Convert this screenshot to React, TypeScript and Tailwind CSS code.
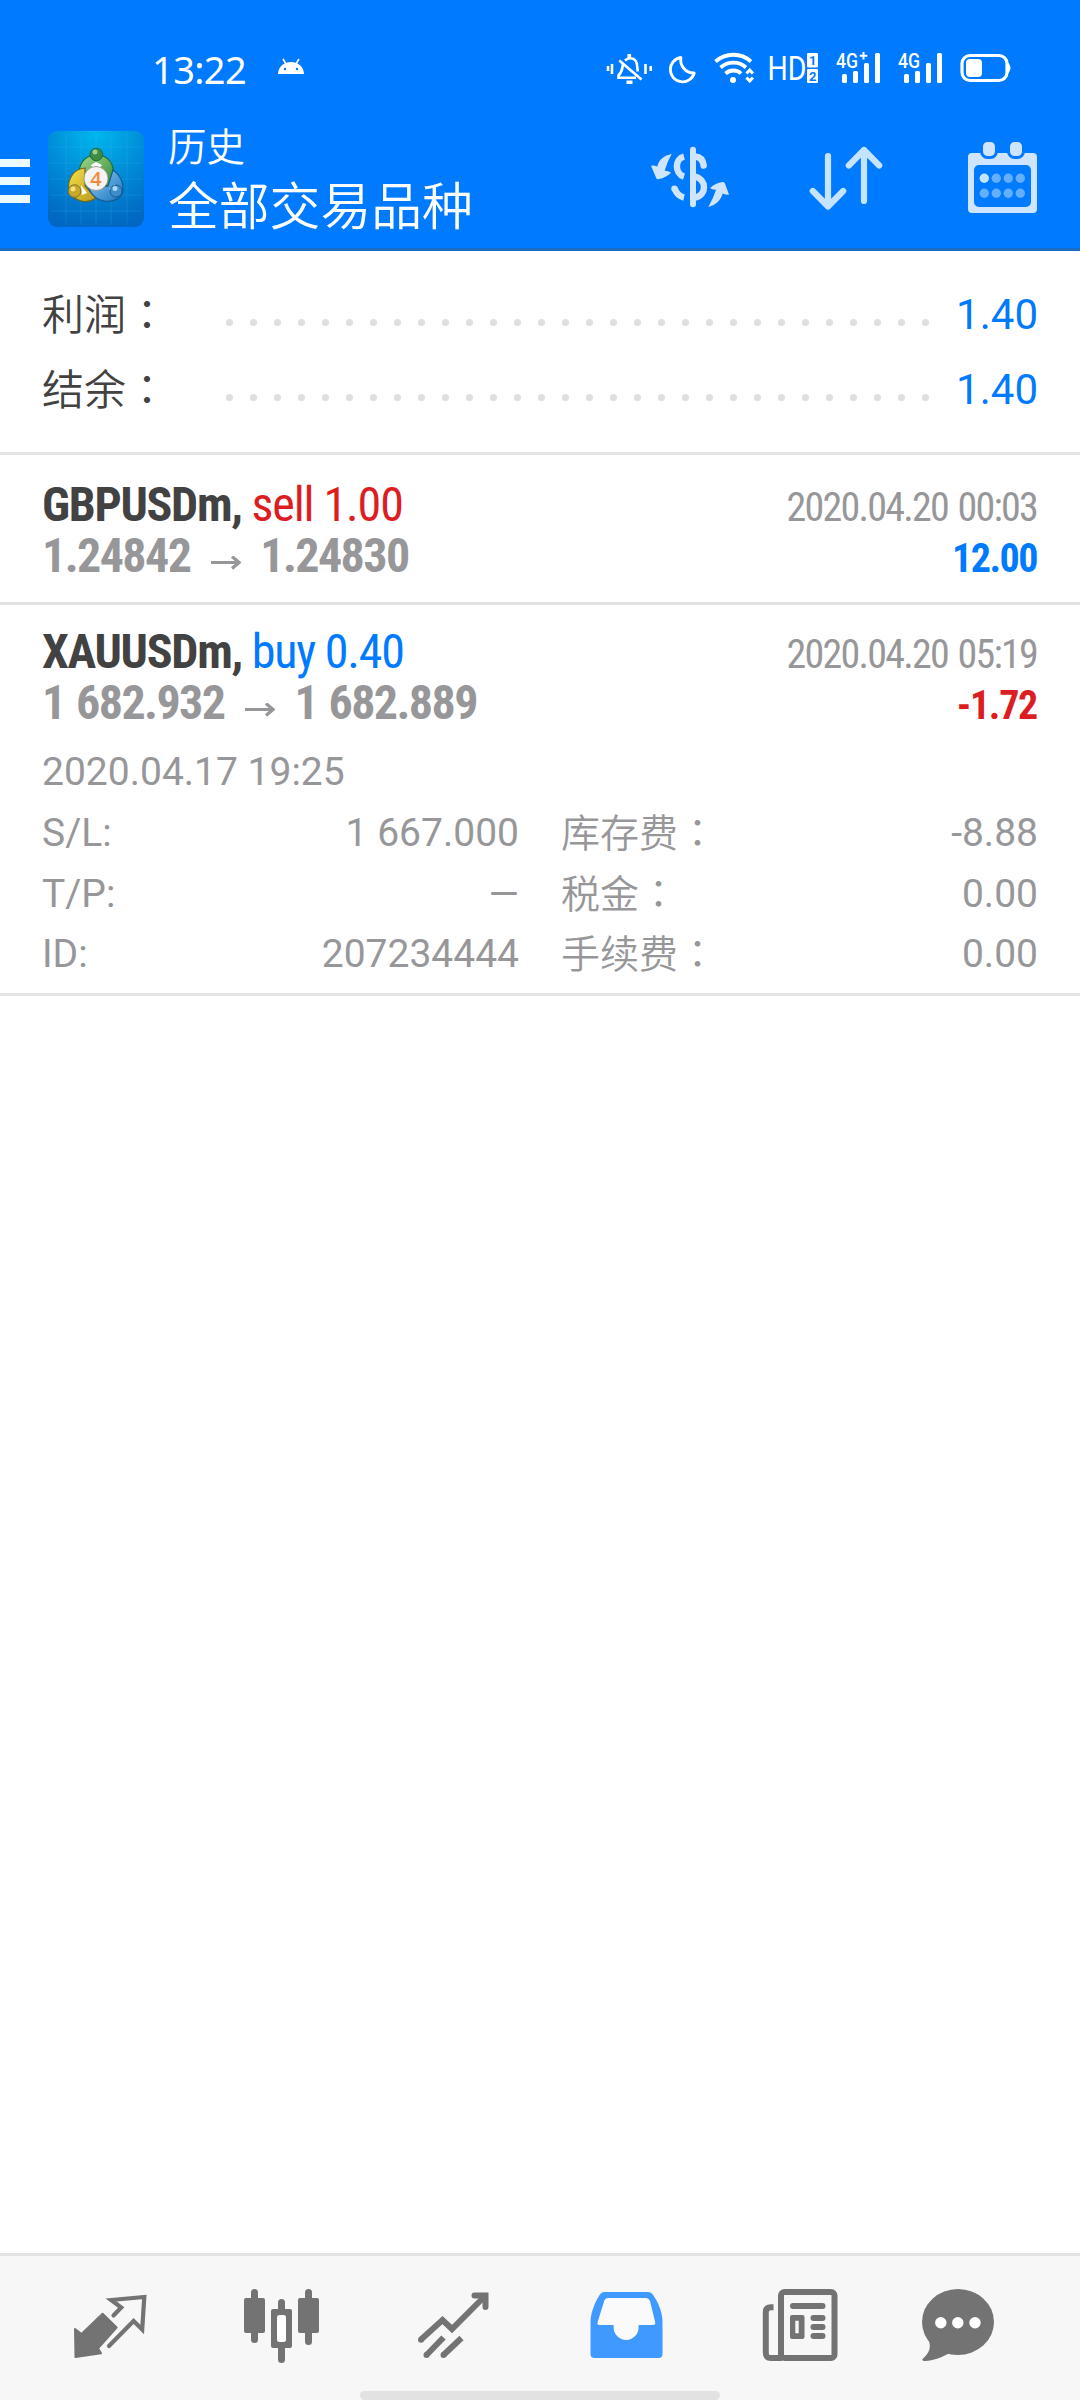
import type { ReactNode } from "react";

type Deal = {
  symbol: string;
  side: "buy" | "sell";
  volume: string;
  open: string;
  close: string;
  time: string;
  profit: string;
};

const summary = [
  { label: "利润", value: "1.40" },
  { label: "结余", value: "1.40" },
];

const deals: Deal[] = [
  { symbol: "GBPUSDm", side: "sell", volume: "1.00", open: "1.24842", close: "1.24830", time: "2020.04.20 00:03", profit: "12.00" },
  { symbol: "XAUUSDm", side: "buy", volume: "0.40", open: "1 682.932", close: "1 682.889", time: "2020.04.20 05:19", profit: "-1.72" },
];

const details = [
  { left: "S/L:", leftValue: "1 667.000", right: "库存费", rightValue: "-8.88" },
  { left: "T/P:", leftValue: "—", right: "税金", rightValue: "0.00" },
  { left: "ID:", leftValue: "207234444", right: "手续费", rightValue: "0.00" },
];

// full-width colon, centred in its em box
function Colon() {
  return <span className="font-['Noto_Sans_CJK_TC',sans-serif]">：</span>;
}

function SignalBars({ label, plus }: { label: string; plus?: boolean }) {
  return (
    <svg width="46" height="38" viewBox="0 0 46 38" fill="white" className="shrink-0 overflow-visible">
      <text x="0" y="19.5" fontSize="20" textLength="22" lengthAdjust="spacingAndGlyphs" className="font-['Roboto',sans-serif] font-medium">
        {label}
      </text>
      {plus && <path d="M27.5 4v7.5M23.8 7.8h7.5" stroke="white" strokeWidth="2" />}
      <rect x="6" y="26" width="5" height="9" rx="1.5" />
      <rect x="17" y="23" width="5" height="12" rx="1.5" />
      <rect x="28" y="15" width="5" height="20" rx="1.5" />
      <rect x="39" y="5" width="5" height="30" rx="1.5" />
    </svg>
  );
}

function StatusBar() {
  return (
    <div className="flex h-[108px] items-start pt-12 text-white">
      <span className="ml-[152px] w-[101px] -mt-[3px] text-[38px] leading-[48px] tracking-[-0.6px] font-['Noto_Sans',sans-serif]">13:22</span>
      <svg width="28" height="38" viewBox="0 0 28 38" className="ml-6 shrink-0">
        <path d="M1 26C1.500 10 26.500 10 27 26Z" fill="white" />
        <path d="M6 11l3 5M22 11l-3 5" stroke="white" strokeWidth="1.6" />
        <circle cx="8" cy="21" r="1.200" fill="#007aff" />
        <circle cx="20" cy="21" r="1.200" fill="#007aff" />
      </svg>

      <svg width="48" height="38" viewBox="0 0 48 38" fill="none" stroke="white" strokeWidth="2.600" className="ml-[301px] shrink-0">
        <path d="M2 18v5M39.500 16v10M44.700 18v5" strokeWidth="2.600" />
        <path d="M6 16v10" strokeWidth="2.600" />
        <path d="M20.500 34.300h6M23.300 6v4" strokeWidth="3.600" />
        <path d="M19 12.500C22 9.500 27 9.500 29.800 13C31.500 15.500 31 19 31.800 23.500M17 16C16 20 17 23 12.500 27.500V29.800H30" />
        <path d="M13.300 12.500L35.500 31.500" />
      </svg>
      <svg width="30" height="38" viewBox="0 0 30 38" fill="none" stroke="white" strokeWidth="2.800" strokeLinejoin="round" className="ml-[14px] shrink-0">
        <path d="M13 9.500A12.200 12.200 0 1 0 26.300 25A13 13 0 0 1 13 9.500Z" />
      </svg>
      <svg width="42" height="38" viewBox="0 0 42 38" fill="none" stroke="white" strokeWidth="3.800" className="ml-4 shrink-0">
        <path d="M1.500 13.500C12 4.500 27 4.500 37 13.500" />
        <path d="M6.500 19.500C14 13 25 13 32 19.500" />
        <path d="M11.500 25.500C16 21.500 23 21.500 27 25.500" />
        <circle cx="19" cy="32" r="3" fill="white" stroke="none" />
        <path d="M32.500 25.500l3.200-3.500 3.200 3.500M32.500 29.500l3.200 3.500 3.200-3.500" strokeWidth="3" />
      </svg>
      <svg width="50" height="38" viewBox="0 0 50 38" fill="white" className="ml-[13px] shrink-0 overflow-visible">
        <text x="-1.500" y="32" fontSize="33.500" textLength="39" lengthAdjust="spacingAndGlyphs" className="font-['Roboto',sans-serif]">
          HD
        </text>
        <rect x="38" y="5" width="11" height="14.500" rx="1" />
        <rect x="38" y="21" width="11" height="14" rx="1" />
        <text x="40" y="17" fontSize="13" fill="#007aff" className="font-['Roboto',sans-serif] font-bold">1</text>
        <text x="40" y="33" fontSize="13" fill="#007aff" className="font-['Roboto',sans-serif] font-bold">2</text>
      </svg>
      <div className="ml-[17px] flex gap-4">
        <SignalBars label="4G" plus />
        <SignalBars label="4G" />
      </div>
      <svg width="52" height="38" viewBox="0 0 52 38" className="ml-[16px] shrink-0">
        <rect x="2" y="7.500" width="45" height="25" rx="8" fill="none" stroke="white" strokeWidth="3.200" />
        <rect x="6" y="11" width="16" height="18" rx="4" fill="white" />
        <path d="M48 15q4 5 0 10z" fill="white" stroke="white" />
      </svg>
    </div>
  );
}

function AppLogo() {
  return (
    <svg width="96" height="96" viewBox="0 0 96 96" className="shrink-0">
      <defs>
        <radialGradient id="sky" cx="50%" cy="0%" r="100%">
          <stop offset="0" stopColor="#00b8ee" />
          <stop offset="0.55" stopColor="#0089d6" />
          <stop offset="1" stopColor="#0068c2" />
        </radialGradient>
        <linearGradient id="green" x1="0" y1="0" x2="1" y2="1">
          <stop offset="0" stopColor="#a5d98c" />
          <stop offset="1" stopColor="#2b8a33" />
        </linearGradient>
        <linearGradient id="yellow" x1="0" y1="0" x2="1" y2="1">
          <stop offset="0" stopColor="#f6e24a" />
          <stop offset="1" stopColor="#b99a1c" />
        </linearGradient>
        <linearGradient id="blue" x1="0" y1="0" x2="1" y2="1">
          <stop offset="0" stopColor="#8fd0f5" />
          <stop offset="1" stopColor="#1a72bd" />
        </linearGradient>
      </defs>
      <rect width="96" height="96" rx="9" fill="url(#sky)" />
      <path d="M18 2v92M33 2v92M48 2v92M63 2v92M79 2v92M2 16h92M2 32h92M2 48h92M2 64h92M2 80h92" stroke="#5cc8f5" strokeOpacity="0.16" />
      <path d="M31 47C30 32 37 24 48.500 24S67 33 65 45C64 52 62 54 59 56L48 36Z" fill="url(#green)" stroke="#1d6b35" strokeWidth="1.200" />
      <path d="M37 37C25 38 20 48 20.500 58C24 70 38 74 48 67L37 55Z" fill="url(#yellow)" stroke="#75661e" strokeWidth="1.200" />
      <path d="M65 39C75 46 77 57 73 65C64 73 48 73 41 58L60 55Z" fill="url(#blue)" stroke="#175a94" strokeWidth="1.200" />
      <path d="M43 34l5-3 6 3-3 4h-6zM33 54l6 8-5 2zM61 58l6-5-1 9z" fill="white" />
      <circle cx="48.300" cy="23.500" r="6.300" fill="#3f8a45" stroke="#1d6b35" />
      <circle cx="47" cy="21" r="2.500" fill="#9dd193" />
      <circle cx="26.500" cy="60" r="6.300" fill="#c6a82b" stroke="#8a7420" />
      <circle cx="25" cy="58" r="2.500" fill="#f5e27c" />
      <circle cx="68" cy="60" r="6" fill="#3b8dcc" stroke="#175a94" />
      <circle cx="67" cy="57.500" r="2.500" fill="#a7d8f7" />
      <circle cx="48" cy="47.500" r="12" fill="#f6f4f2" stroke="#8c8c80" strokeWidth="0.800" />
      <text x="48" y="54.500" textAnchor="middle" fontSize="20" fill="#f28a3c" className="font-['Open_Sans',sans-serif] font-semibold">4</text>
    </svg>
  );
}

function TitleBar() {
  return (
    <div className="flex h-[140px] text-white">
      <div className="mt-[51px] flex w-[30px] flex-col gap-2.5">
        <div className="h-2 bg-[#eafaff]" />
        <div className="h-2 bg-[#eafaff]" />
        <div className="h-2 bg-[#eafaff]" />
      </div>
      <div className="mt-[23px] ml-[18px]">
        <AppLogo />
      </div>
      <div className="ml-6 w-[482px] pt-[9px] font-['Noto_Sans_CJK_SC',sans-serif] font-[350]">
        <div className="text-[38.5px] leading-[54px]">历史</div>
        <div className="text-[50.8px] leading-[64px]">全部交易品种</div>
      </div>

      <svg width="80" height="74" viewBox="0 0 80 74" className="mt-8 shrink-0">
        <g fill="none" stroke="#cfe4fd" strokeWidth="6.500">
          <path d="M43 9.700v54.500" strokeWidth="6" strokeLinecap="round" />
          <path d="M34 16.600C24.500 19 24.500 33.500 34 36.600" />
          <path d="M45 16.600C50 17 53 20 53.700 25.500" strokeLinecap="round" />
          <path d="M45 36.600C57 39.500 57 55 45 57.600" />
          <path d="M24.700 48.500C26.500 53.500 29.500 56.500 34 57.500" />
        </g>
        <g fill="#cfe4fd">
          <path d="M21.700 14C14 15.500 9 19.500 7.300 26.500Q4 25 1 25.700L6.200 38Q7 39.700 9 39Q16 37.700 21 32.700Q18 30.500 14.700 30.700Q17 22 21.700 14Z" />
          <path d="M58.300 67Q63.500 58 66 49.700Q62 50 60 48Q65.500 43 72.500 42Q74.300 41.600 75 43.500L79 54.700Q76 55 72.700 53.500C71 60 66 65 58.300 67Z" />
        </g>
        <circle cx="24.500" cy="48.700" r="3.200" fill="#cfe4fd" />
      </svg>
      <svg width="76" height="74" viewBox="0 0 76 74" fill="none" stroke="#c5e4ff" strokeWidth="6.200" strokeLinecap="round" strokeLinejoin="round" className="mt-8 ml-[78px] shrink-0">
        <path d="M20 16v50.500M4.800 51L20 66.500L35.200 51" />
        <path d="M56 61V10M40.800 25.500L56 10L71.200 25.500" />
      </svg>
      <svg width="73" height="74" viewBox="0 0 73 74" className="mt-8 ml-[82px] shrink-0">
        <path fillRule="evenodd" fill="#cfe4fd" d="M6 13H67a4 4 0 0 1 4 4V69a4 4 0 0 1-4 4H6a4 4 0 0 1-4-4V17a4 4 0 0 1 4-4ZM13 25a5 5 0 0 0-5 5V62a5 5 0 0 0 5 5H60a5 5 0 0 0 5-5V30a5 5 0 0 0-5-5Z" />
        <rect x="15.500" y="0.500" width="15" height="17" rx="6" fill="#cfe4fd" stroke="#007aff" strokeWidth="3" />
        <rect x="42.500" y="0.500" width="15" height="17" rx="6" fill="#cfe4fd" stroke="#007aff" strokeWidth="3" />
        {[38.3, 53.3].map((cy) =>
          [18.3, 30.3, 42.3, 54.3].map((cx) => (
            <circle key={`${cx}-${cy}`} cx={cx} cy={cy} r="4.700" fill={cx < 20 && cy < 40 ? "#c5e4ff" : "#62b0ff"} />
          ))
        )}
      </svg>
    </div>
  );
}

function DealHeader({ deal }: { deal: Deal }) {
  return (
    <div className="font-['Roboto_Condensed','Roboto',sans-serif] [font-stretch:75%] whitespace-pre">
      <div className="flex h-[51px] items-baseline justify-between leading-[51px]">
        <div className="text-[48px]">
          <span className="font-bold tracking-[-1.3px] text-[#424242]">{deal.symbol}, </span>
          <span className={deal.side === "buy" ? "tracking-[-1.2px] text-[#007aff]" : "tracking-[-1.1px] text-[#dc1e23]"}>
            {deal.side} {deal.volume}
          </span>
        </div>
        <div className="mr-px text-[40px] tracking-[-1.75px] [word-spacing:2px] text-[#97979a]">{deal.time}</div>
      </div>
      <div className="flex h-[51px] items-baseline justify-between leading-[51px] font-bold">
        <div className="flex items-baseline text-[48px] tracking-[-1.6px] [word-spacing:2px] text-[#97979a]">
          <span>{deal.open}</span>
          <svg width="30" height="16" viewBox="0 0 30 16" fill="none" stroke="#97979a" strokeWidth="3.200" className="mr-[19px] ml-[21px]">
            <path d="M0 6.500H28M21 0.500L28 6.500L21 12.500" />
          </svg>
          <span>{deal.close}</span>
        </div>
        <div className={deal.profit.startsWith("-") ? "mr-px text-[40px] tracking-[-1.3px] text-[#dc1e23]" : "mr-px text-[40px] tracking-[-1.5px] text-[#007aff]"}>{deal.profit}</div>
      </div>
    </div>
  );
}

function NavIcon({ children, className }: { children: ReactNode; className?: string }) {
  return (
    <svg width="80" height="90" viewBox="0 0 80 90" fill="#737373" className={`shrink-0 overflow-visible ${className ?? ""}`}>
      {children}
    </svg>
  );
}

function BottomNav() {
  return (
    <nav className="flex h-[147px] flex-col border-t-[3px] border-[#e3e3e3] bg-[#f7f7f7]">
      <div className="flex gap-[92px] pt-6 pl-[70px]">
        <NavIcon>
          <path d="M5 49L11.500 54L32.600 33.800L46.600 47.500L28 68.300L31 73.300L5.500 77Z" stroke="#737373" strokeWidth="2" strokeLinejoin="round" />
          <path d="M43.500 35.500L51.200 27.500L41.200 20L74.300 17L72.200 49.500L63.600 41L39 66" fill="none" stroke="#737373" strokeWidth="4.200" strokeLinecap="round" />
        </NavIcon>
        <NavIcon>
          <rect x="2" y="18" width="21" height="35" rx="2" />
          <rect x="9" y="9" width="7" height="54" rx="3.500" />
          <rect x="56" y="18" width="21" height="35" rx="2" />
          <rect x="63" y="9" width="7" height="56" rx="3.500" />
          <rect x="29" y="29" width="21" height="39" rx="2" />
          <rect x="36" y="19" width="7" height="64" rx="3.500" />
          <rect x="35" y="35" width="9" height="27" rx="2.500" fill="white" />
        </NavIcon>
        <NavIcon>
          <g fill="none" stroke="#737373" strokeWidth="6">
            <path d="M7 59.500L28.500 40L38 49L71.500 15.500" />
            <path d="M60.500 15.500H71.500V27" strokeLinecap="round" />
            <path d="M29.500 57.500L12.500 75M47.500 58L29.500 75" />
          </g>
          <circle cx="7" cy="59.800" r="3" />
          <circle cx="12.500" cy="75" r="3" />
          <circle cx="29.500" cy="75" r="3" />
        </NavIcon>
        <NavIcon>
          <path fill="#4099ff" d="M18.500 12H62C64.500 12 66 13.500 67.500 15.500C73.500 24.500 76.500 34 76.500 42V74a4 4 0 0 1-4 4H8.500a4 4 0 0 1-4-4V42C4.500 34 8 24 13.300 15.500C14.700 13.300 16 12 18.500 12Z" />
          <path fill="#fafafa" d="M22 18H59.500C61.800 18 63 19 64 21L69 41.500C69.600 44 69 45 67 45H52.600V47.500a12.500 12.500 0 0 1-25 0V45H13.500C11.500 45 11 44 11.800 41.500L18.200 21C19 19 20 18 22 18Z" />
        </NavIcon>
        <NavIcon>
          <rect x="23" y="12" width="53.500" height="66" rx="3.500" fill="none" stroke="#737373" strokeWidth="6" />
          <path d="M15.500 27.300H13C9.500 27.300 7.800 29 7.800 32V72.500C7.800 76.500 9.500 78 13 78H24" fill="none" stroke="#737373" strokeWidth="6" />
          <rect x="32" y="23" width="35.500" height="6" rx="3" />
          <path fillRule="evenodd" d="M34 35H44.500a2 2 0 0 1 2 2V57a2 2 0 0 1-2 2H34a2 2 0 0 1-2-2V37a2 2 0 0 1 2-2ZM37.300 40.700V53.300H40.700V40.700Z" />
          <rect x="52.500" y="35" width="15" height="6" rx="3" />
          <rect x="52.500" y="44" width="15" height="6" rx="3" />
          <rect x="52.500" y="53" width="15" height="6" rx="3" />
        </NavIcon>
        <NavIcon className="-ml-3">
          <ellipse cx="40" cy="42" rx="36" ry="33" />
          <path d="M10.500 60C13 66 12.500 72 4.500 79C4 80.500 5 81 7 81C16 80.500 22 78 31 73.500Z" />
          <circle cx="22.800" cy="42.700" r="5.700" fill="white" />
          <circle cx="39.800" cy="42.700" r="5.700" fill="white" />
          <circle cx="57" cy="42.700" r="5.700" fill="white" />
        </NavIcon>
      </div>
      <div className="mt-auto h-[9px] w-[360px] self-center rounded-full bg-[#e2e2e2]" />
    </nav>
  );
}

export default function App() {
  return (
    <div className="flex h-[2400px] w-[1080px] flex-col overflow-hidden bg-white font-['Roboto','Noto_Sans_CJK_SC',sans-serif]">
      <header className="h-[251px] border-b-[3px] border-[#1a6cc0] bg-[#007aff]">
        <StatusBar />
        <TitleBar />
      </header>

      <main className="flex-1">
        <section className="h-[204px] border-b-[3px] border-[#e3e3e3] px-[42px] pt-[26px] text-[42px] leading-[75px]">
          {summary.map((row) => (
            <div key={row.label} className="flex h-[75px]">
              <div className="-mt-[3px] w-[184px] font-['Noto_Sans_CJK_SC',sans-serif] font-[350] text-[#424242]">
                {row.label}
                <Colon />
              </div>
              <div className="mt-[42px] flex gap-[17px]">
                {Array.from({ length: 30 }, (_, i) => (
                  <span key={i} className="size-[7px] rounded-full bg-[#dfdfdf]" />
                ))}
              </div>
              <div className="ml-auto text-[#007aff]">{row.value}</div>
            </div>
          ))}
        </section>

        <section className="h-[150px] border-b-[3px] border-[#e3e3e3] px-[42px] pt-6">
          <DealHeader deal={deals[0]} />
        </section>

        <section className="h-[391px] border-b-[3px] border-[#e3e3e3] px-[42px] pt-[21px]">
          <DealHeader deal={deals[1]} />
          <div className="mt-[14px] text-[39px] leading-[61px] text-[#97979a]">
            <div>2020.04.17 19:25</div>
            {details.map((row) => (
              <div key={row.left} className="flex h-[60.6px]">
                <div className="flex w-[477px] justify-between">
                  <span>{row.left}</span>
                  <span>{row.leftValue}</span>
                </div>
                <div className="ml-[42px] flex flex-1 justify-between">
                  <span className="-mt-[3px] font-['Noto_Sans_CJK_SC',sans-serif] font-[350]">
                    {row.right}
                    <Colon />
                  </span>
                  <span>{row.rightValue}</span>
                </div>
              </div>
            ))}
          </div>
        </section>
      </main>

      <BottomNav />
    </div>
  );
}
